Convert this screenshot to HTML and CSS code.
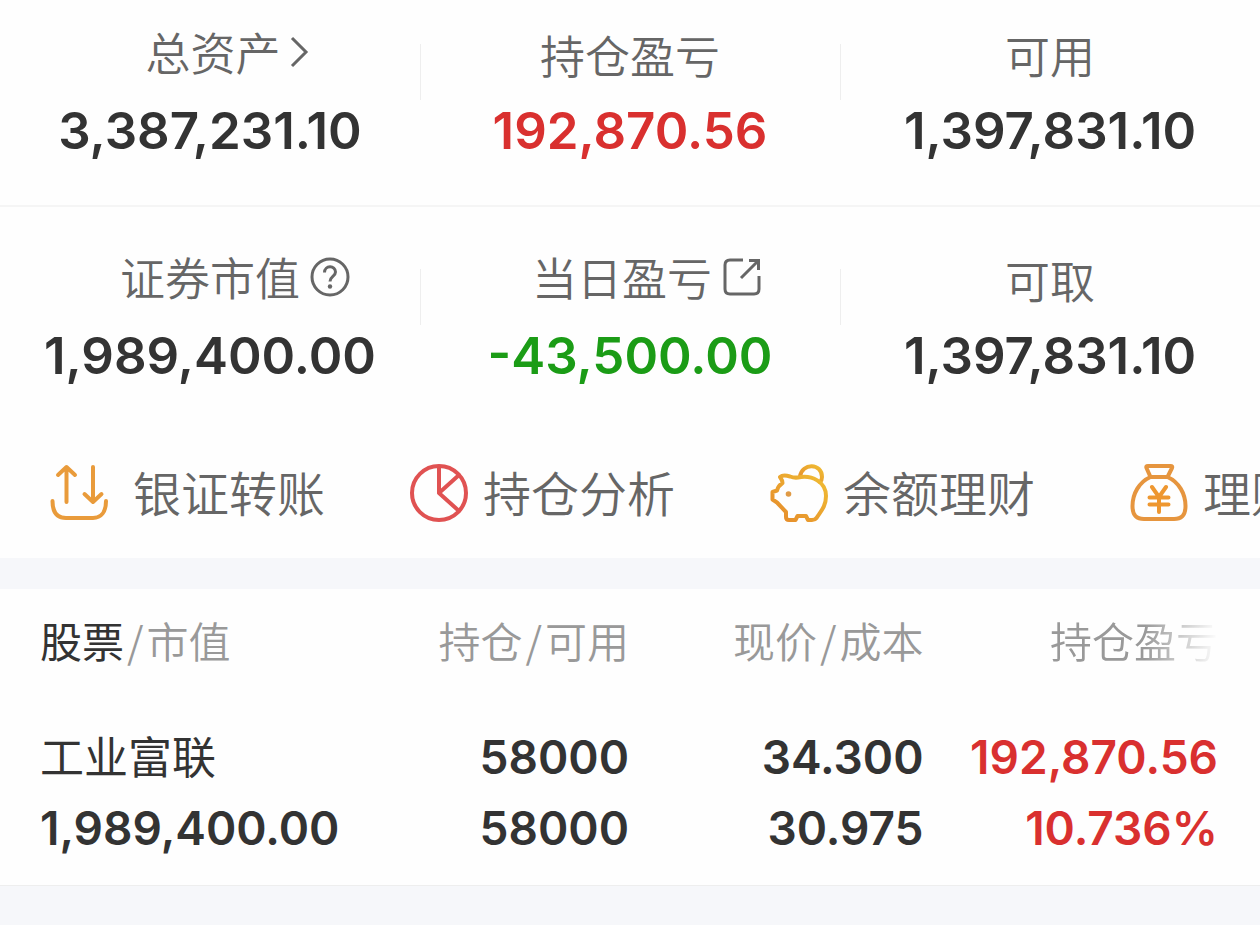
FILE: index.html
```
<!DOCTYPE html>
<html lang="zh-CN">
<head>
    <meta charset="UTF-8">
    <meta name="viewport" content="width=device-width, initial-scale=1.0">
    <title>持仓</title>
    <link rel="stylesheet" href="styles.css">
</head>
<body>
    <section class="account">
        <div class="summary-row">
            <div class="summary-item">
                <a class="label has-icon" href="#assets">总资产
                    <svg class="icon-chevron" viewBox="0 0 22 40"><path d="M3 6 L17 20 L3 34"/></svg>
                </a>
                <div class="value">3,387,231.10</div>
            </div>
            <div class="summary-item">
                <div class="label">持仓盈亏</div>
                <div class="value up">192,870.56</div>
            </div>
            <div class="summary-item">
                <div class="label">可用</div>
                <div class="value">1,397,831.10</div>
            </div>
        </div>
        <div class="summary-row">
            <div class="summary-item">
                <button class="label has-icon" type="button">证券市值
                    <svg class="icon-help" viewBox="0 0 40 40">
                        <circle cx="20" cy="20" r="18"/>
                        <path d="M14.500 15.500 C14.500 8 25.500 8 25.500 15 C25.500 19.500 20 19.500 20 24.500"/>
                        <circle class="dot" cx="20" cy="29.500" r="2.200"/>
                    </svg>
                </button>
                <div class="value">1,989,400.00</div>
            </div>
            <div class="summary-item">
                <a class="label has-icon" href="#today">当日盈亏
                    <svg class="icon-open" viewBox="0 0 40 40">
                        <path d="M21 3 H8 Q3 3 3 8 V32 Q3 37 8 37 H32 Q37 37 37 32 V19"/>
                        <path d="M27 3.500 H36.500 V13 M36 4 L19 21"/>
                    </svg>
                </a>
                <div class="value down">-43,500.00</div>
            </div>
            <div class="summary-item">
                <div class="label">可取</div>
                <div class="value">1,397,831.10</div>
            </div>
        </div>

        <nav class="actions">
            <a class="action transfer" href="#transfer">
                <svg viewBox="0 0 60 60">
                    <path d="M17.500 38 V3 M9 11 L17.500 3 L26 11 M44 3 V38 M35.500 30 L44 38 L52.500 30"/>
                    <path d="M3.500 37 C3.500 48 8 54 17 54 H44 C52 54 57 48 57 37"/>
                </svg>
                <span>银证转账</span>
            </a>
            <a class="action analysis" href="#analysis">
                <svg viewBox="0 0 60 60">
                    <circle cx="30" cy="29" r="27"/>
                    <path d="M30 3 V29 L50 11 M30 29 L50 47"/>
                </svg>
                <span>持仓分析</span>
            </a>
            <a class="action piggy" href="#balance">
                <svg viewBox="0 0 60 60">
                    <defs>
                        <linearGradient id="piggy-gold" x1="0" y1="1" x2="1" y2="0">
                            <stop offset="0" stop-color="#e58a2c"/>
                            <stop offset="1" stop-color="#f0bd33"/>
                        </linearGradient>
                    </defs>
                    <g stroke="url(#piggy-gold)">
                        <path d="M31 12.500 C33 -1.500 53 -1 53 13 Q53 16 51 18"/>
                        <path d="M11 13 Q14 10.500 21 12.500 Q25 14 29 13.500 C43 10.500 57 18 57 32 C57 43 51 48 47.500 54 Q46 56 43 56 H39 L37 52 H28.500 L26.500 56 H20 Q17 56 17 53 V48 L8 38.500 L3.500 35.500 V28 L8 26.500 Q9 22 13.500 19 Q13.500 16.500 11 13 Z"/>
                    </g>
                    <circle class="eye" cx="19.500" cy="30" r="2.800"/>
                </svg>
                <span>余额理财</span>
            </a>
            <a class="action wealth" href="#wealth">
                <svg viewBox="0 0 60 60">
                    <path d="M21.500 13 L17.500 4 Q16.500 2 19 2 H41.500 Q44 2 43 4 L38.500 13 Z"/>
                    <path d="M21.500 13 C10 18 3.500 30 3.500 42 C3.500 51 7 55 15 55 H45 C53 55 56.500 51 56.500 42 C56.500 30 50 18 38.500 13"/>
                    <path class="yen" d="M23 23 L30 33 L37 23 M20.500 33.500 H39.500 M20.500 40.500 H39.500 M30 33 V48"/>
                </svg>
                <span>理财</span>
            </a>
        </nav>
    </section>

    <section class="holdings">
        <table>
            <thead>
                <tr>
                    <th scope="col"><b>股票</b><i>/</i>市值</th>
                    <th scope="col">持仓<i>/</i>可用</th>
                    <th scope="col">现价<i>/</i>成本</th>
                    <th scope="col" class="fade">持仓盈亏</th>
                </tr>
            </thead>
            <tbody>
                <tr class="first-line">
                    <td class="stock-name">工业富联</td>
                    <td>58000</td>
                    <td>34.300</td>
                    <td class="up">192,870.56</td>
                </tr>
                <tr class="second-line">
                    <td>1,989,400.00</td>
                    <td>58000</td>
                    <td>30.975</td>
                    <td class="up">10.736%</td>
                </tr>
            </tbody>
        </table>
    </section>
</body>
</html>
```
FILE: styles.css
```
* {
    box-sizing: border-box;
}
body {
    margin: 0;
    background-color: #f6f7fa;
    color: #333;
    font-family: Inter, "Noto Sans CJK SC", sans-serif;
    overflow-x: hidden;
}
a {
    color: inherit;
    text-decoration: none;
}
svg {
    flex-shrink: 0;
    fill: none;
    stroke: currentColor;
    stroke-width: 3;
}
.account {
    background-color: #fefefe;
}

/* Account totals */
.summary-row {
    display: grid;
    grid-template-columns: repeat(3, 1fr);
    padding: 41px 0 42px;
}
.summary-row:first-child {
    padding-top: 23px;
    border-bottom: 2px solid #f5f5f5;
}
.summary-item {
    display: flex;
    flex-direction: column;
    align-items: center;
}
.summary-item + .summary-item {
    background: linear-gradient(#eee, #eee) no-repeat left 21px / 1px 56px;
}
.label {
    display: flex;
    align-items: center;
    height: 66px;
    padding: 0 0 2px;
    border: none;
    background: none;
    color: #666;
    font-family: "Noto Sans CJK SC", sans-serif;
    font-size: 45px;
    font-weight: 350;
    line-height: 66px;
    white-space: nowrap;
}
.label.has-icon {
    padding-bottom: 8px;
}
/* icons hang past the label so the text stays centred */
.icon-chevron {
    width: 22px;
    height: 40px;
    margin: 0 -36px 0 8px;
}
.icon-help {
    width: 40px;
    height: 40px;
    margin: 0 -50px 0 10px;
}
.icon-help .dot {
    fill: currentColor;
    stroke: none;
}
.icon-open {
    width: 40px;
    height: 40px;
    margin: 0 -34px 0 10px;
}
.value {
    margin-top: 10px;
    font-size: 51px;
    font-weight: 600;
    line-height: 64px;
}
.up {
    color: #d9302f;
}
.down {
    color: #1b9c16;
}

/* Shortcuts */
.actions {
    display: flex;
    height: 128px;
    padding-left: 49px;
    overflow: hidden;
}
.action {
    display: flex;
    flex: 0 0 360px;
    align-items: center;
    gap: 14px;
    color: #666;
    font-family: "Noto Sans CJK SC", sans-serif;
    font-size: 48px;
    font-weight: 350;
    line-height: 70px;
    white-space: nowrap;
}
.action span {
    padding-bottom: 6px;
}
.action svg {
    width: 60px;
    height: 60px;
    stroke-width: 4;
    stroke-linecap: round;
    stroke-linejoin: round;
}
.transfer {
    gap: 24px;
}
.transfer svg {
    stroke: #e99b3b;
}
.analysis svg {
    stroke: #e05252;
}
.piggy .eye {
    fill: #e09a45;
    stroke: none;
}
.wealth svg {
    stroke: #e6953e;
}
.wealth .yen {
    stroke: #ee9730;
}

/* Holdings */
.holdings {
    margin-top: 31px;
    padding: 0 42px 0 40px;
    border-bottom: 1px solid #eee;
    background-color: #fefefe;
}
table {
    width: 100%;
    table-layout: fixed;
    border-collapse: collapse;
}
th, td {
    padding: 0;
    text-align: right;
    white-space: nowrap;
}
th:first-child, td:first-child {
    text-align: left;
}
th {
    height: 106px;
    padding-bottom: 6px;
    color: #999;
    font-family: "Noto Sans CJK SC", sans-serif;
    font-size: 42px;
    font-weight: 350;
}
th b {
    color: #333;
    font-weight: 400;
}
th i {
    margin: 0 3px;
    font-style: normal;
}
.fade {
    -webkit-mask-image: linear-gradient(to right, #000 75%, transparent);
    mask-image: linear-gradient(to right, #000 75%, transparent);
}
td {
    font-size: 46px;
    font-weight: 600;
    line-height: 60px;
}
.first-line td {
    height: 92px;
    vertical-align: bottom;
}
.second-line td {
    height: 98px;
    padding-top: 11px;
    vertical-align: top;
}
.first-line .stock-name {
    padding-bottom: 2px;
    font-family: "Noto Sans CJK SC", sans-serif;
    font-size: 44px;
    font-weight: 400;
}
```
